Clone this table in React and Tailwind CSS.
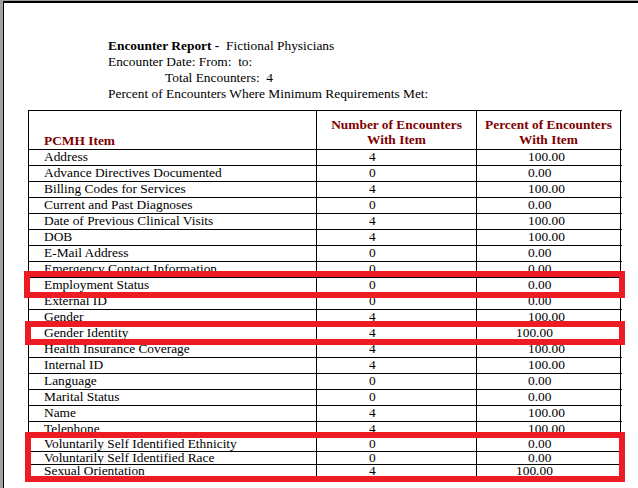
const ROWS = [
  ['Address', '4', '100.00'],
  ['Advance Directives Documented', '0', '0.00'],
  ['Billing Codes for Services', '4', '100.00'],
  ['Current and Past Diagnoses', '0', '0.00'],
  ['Date of Previous Clinical Visits', '4', '100.00'],
  ['DOB', '4', '100.00'],
  ['E-Mail Address', '0', '0.00'],
  ['Emergency Contact Information', '0', '0.00'],
  ['Employment Status', '0', '0.00'],
  ['External ID', '0', '0.00'],
  ['Gender', '4', '100.00'],
  ['Gender Identity', '4', '100.00', true],
  ['Health Insurance Coverage', '4', '100.00'],
  ['Internal ID', '4', '100.00'],
  ['Language', '0', '0.00'],
  ['Marital Status', '0', '0.00'],
  ['Name', '4', '100.00'],
  ['Telephone', '4', '100.00'],
  ['Voluntarily Self Identified Ethnicity', '0', '0.00', false, 'h-[14px]'],
  ['Voluntarily Self Identified Race', '0', '0.00', false, 'h-[13px]'],
  ['Sexual Orientation', '4', '100.00', true, 'h-[14px]'],
]

function Row({ item, count, pct, shifted, height }) {
  return (
    <div className={`flex border-b border-black ${height || 'h-[16px]'}`}>
      <div className="w-[288px] border-r border-black pl-[15px] pb-[1px] flex items-center">{item}</div>
      <div className="w-[160px] border-r border-black pl-[52px] pb-[1px] flex items-center">{count}</div>
      <div className={`w-[144px] border-r border-black pb-[1px] flex items-center ${shifted ? 'pl-[39px]' : 'pl-[51px]'}`}>{pct}</div>
    </div>
  )
}

export default function App() {
  return (
    <div className="h-[488px] overflow-hidden bg-[#a0a0a0] pl-[3px] pt-[1px]" style={{ fontFamily: '"Liberation Serif", "Times New Roman", serif' }}>
      <div className="relative h-full bg-white border-l border-t-2 border-black text-black text-[13.4px] leading-[16px]">
        {/* report heading */}
        <div className="pt-[35px] pl-[104px]">
          <p><span className="font-bold">Encounter Report -</span>&nbsp; Fictional Physicians</p>
          <p>Encounter Date: From:&nbsp; to:</p>
          <p className="pl-[57px]">Total Encounters:&nbsp; 4</p>
          <p>Percent of Encounters Where Minimum Requirements Met:</p>
        </div>

        {/* table */}
        <div className="mt-[8px] ml-[24px] w-[594px] border-l border-t border-black">
          <div className="flex border-b border-black h-[39px] text-[#800000] font-bold leading-[15px]">
            <div className="w-[288px] border-r border-black pl-[15px] flex items-end pb-[1px]">PCMH Item</div>
            <div className="w-[160px] border-r border-black flex items-end justify-center text-center pb-[2px]">
              Number of Encounters<br />With Item
            </div>
            <div className="w-[144px] border-r border-black flex items-end justify-center text-center pb-[2px]">
              Percent of Encounters<br />With Item
            </div>
          </div>
          {ROWS.map(([item, count, pct, shifted, height]) => (
            <Row key={item} item={item} count={count} pct={pct} shifted={shifted} height={height} />
          ))}
        </div>

        {/* highlight boxes */}
        <div className="absolute left-[20px] top-[268px] w-[601px] h-[27px] border-[6px] border-[#ed1c24]" />
        <div className="absolute left-[21px] top-[318px] w-[600px] h-[24px] border-[6px] border-[#ed1c24]" />
        <div className="absolute left-[21px] top-[429px] w-[600px] h-[50px] border-[6px] border-[#ed1c24]" />
      </div>
    </div>
  )
}
